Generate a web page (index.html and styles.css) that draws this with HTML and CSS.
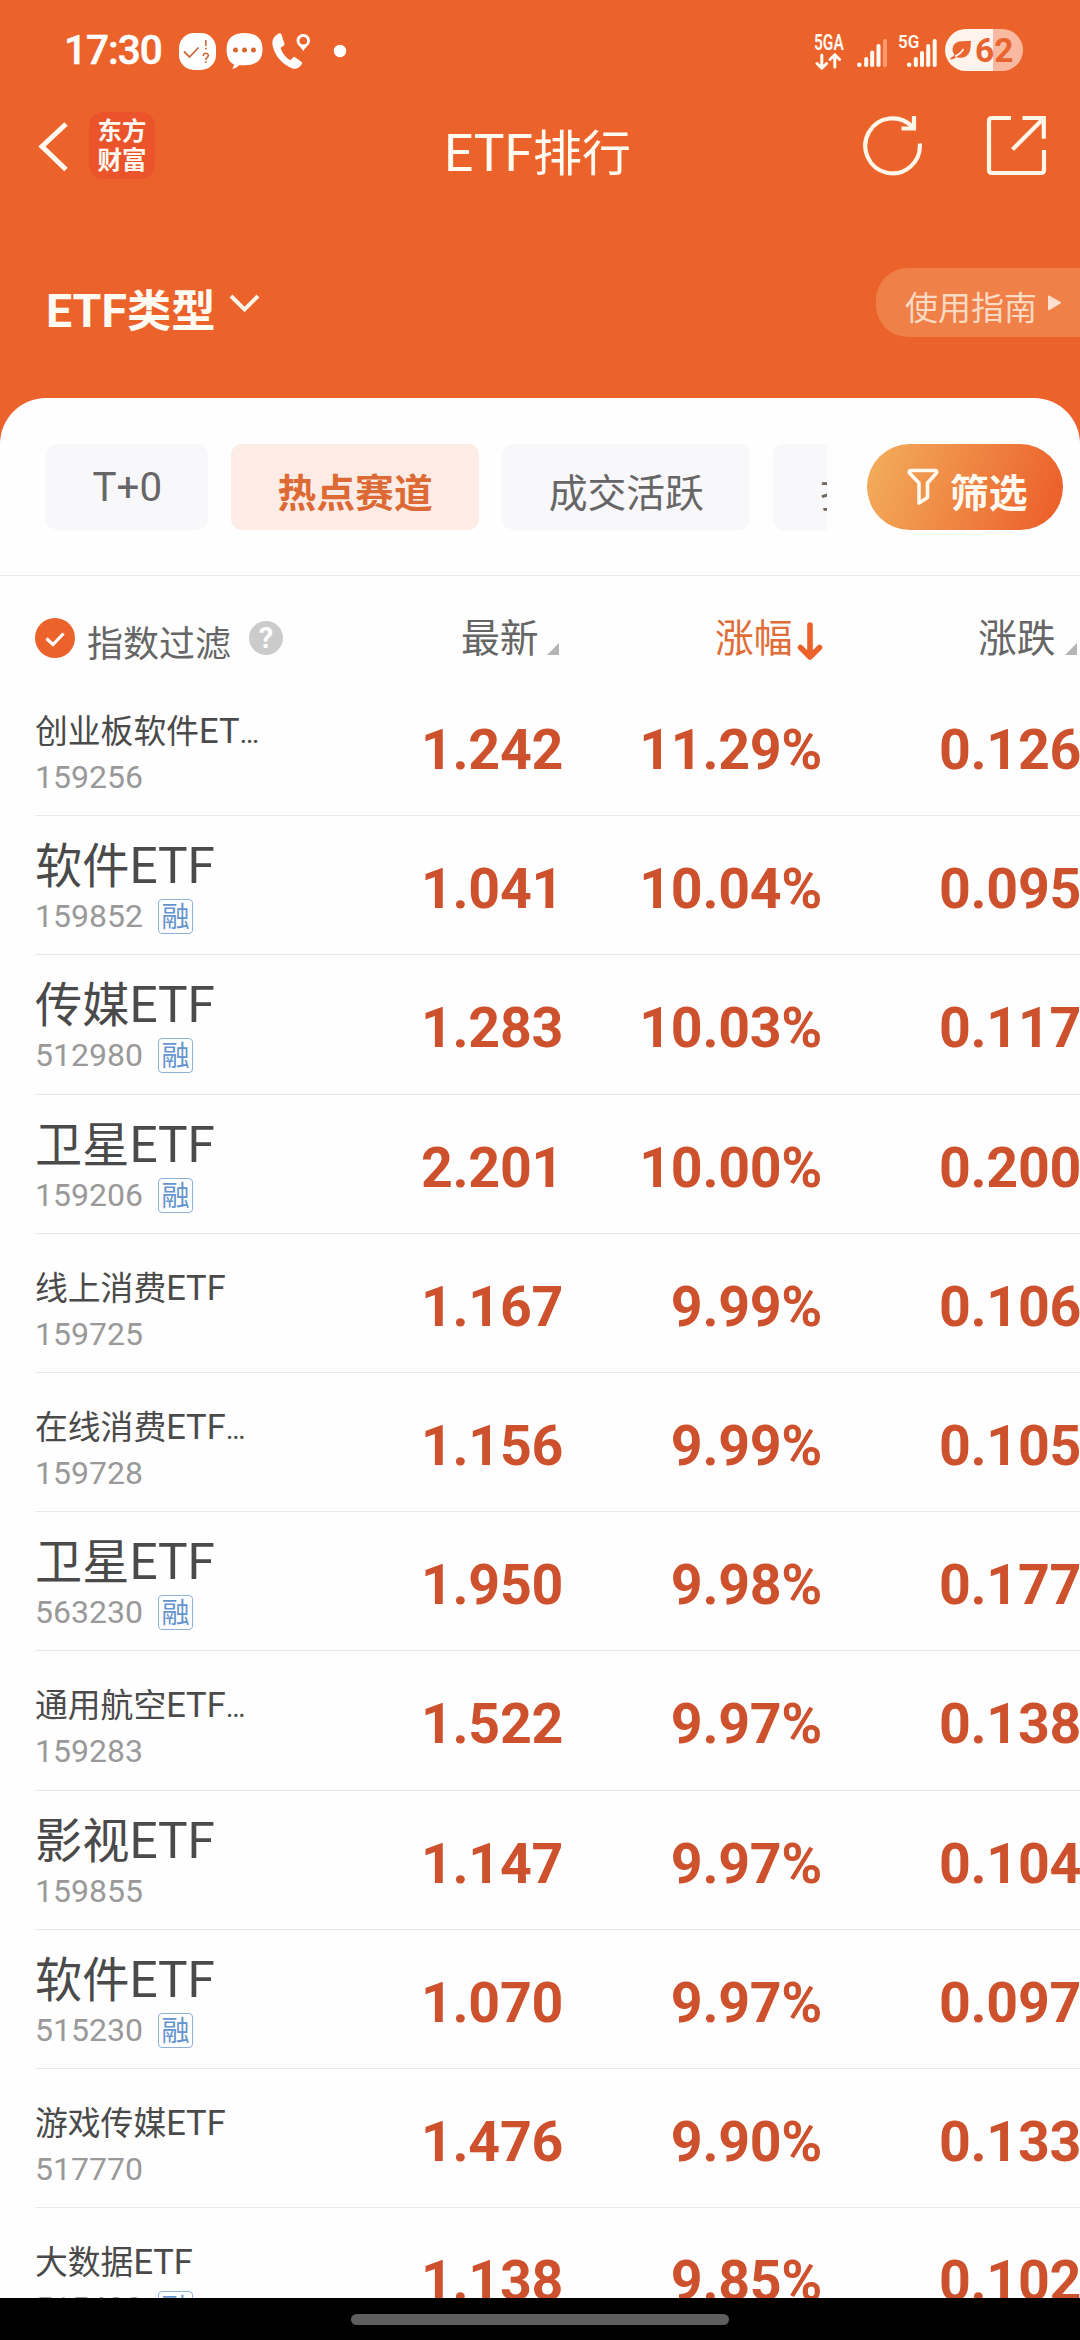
FILE: index.html
```html
<!DOCTYPE html>
<html lang="zh-CN">
<head>
<meta charset="utf-8">
<title>ETF排行</title>
<link rel="stylesheet" href="styles.css">
</head>
<body>
<div class="screen">
  <header class="top">
    <div class="status">
      <span class="time">17:30</span>
      <svg class="status-left" width="170" height="42" viewBox="178 30 170 42">
        <rect x="179" y="33" width="37" height="37" rx="15" fill="#fff"/>
        <path d="M184 51.500l5.500 5.500 9-9.500" fill="none" stroke="#c96a3c" stroke-width="1.800"/>
        <path d="M205.800 40v6M205.800 47.800v1.700M203.300 56c0-3.600 5-3.600 5-.5 0 2-2.500 2-2.500 4.500M205.800 61.300v1.700" fill="none" stroke="#c96a3c" stroke-width="1.600"/>
        <path d="M244.500 33c11.500 0 18 5 18 16.300s-6.500 16-18 16h-5.500c-2 2.200-4 3.500-7 3.700 1.400-1.500 2-3.200 1.800-4.800-5-2.300-7.200-7.500-7.200-14.900C226.600 38 233 33 244.500 33z" fill="#fff"/>
        <circle cx="235.500" cy="50" r="2.500" fill="#d8672f"/><circle cx="244.500" cy="50" r="2.500" fill="#d8672f"/><circle cx="253.500" cy="50" r="2.500" fill="#d8672f"/>
        <path d="M279 33.500c-5.500 2.500-7.800 7-6 13.500 2.800 10 9.500 17.500 19.500 21.500 4 1.200 7-1 9.300-4.300.6-1 .4-1.800-.4-2.400l-6-4.300c-1-.7-2-.5-2.800.3l-2 2.400c-4.500-2.200-8.300-7-10-12.500l3-2c1-.7 1.100-1.400.7-2.500l-2.800-8.500c-.5-1.200-1.300-1.700-2.500-1.200z" fill="#fff"/>
        <path d="M303.300 34c-4 0-6.700 3-6.700 6.600 0 4.400 4.400 6.400 6.700 10.600 2.300-4.200 6.700-6.200 6.700-10.600 0-3.600-2.700-6.600-6.700-6.600zm0 3a3.800 3.800 0 1 1 0 7.600 3.800 3.800 0 0 1 0-7.600z" fill="#fff" fill-rule="evenodd"/>
        <circle cx="340" cy="51" r="6.200" fill="#fff"/>
      </svg>
      <div class="network">
        <span class="net-label net-5ga">5GA</span>
        <svg width="29" height="17" viewBox="814 53 29 17" fill="none" stroke="#fffaf2" stroke-width="3" stroke-linecap="round" stroke-linejoin="round"><path d="M821.800 55v13M817 63.500l4.800 4.800 4.800-4.800M834.800 67V55M830 59.500l4.800-4.800 4.800 4.800"/></svg>
      </div>
      <svg class="signal-one" width="32" height="30" viewBox="856 38 32 30" fill="#fffaf2">
        <circle cx="859.300" cy="64.800" r="2.300"/><rect x="864.200" y="57" width="4" height="10" rx="1.800"/><rect x="870.200" y="50.500" width="4" height="16.500" rx="1.800"/><rect x="876.500" y="44" width="4" height="23" rx="1.800"/><rect x="883" y="39" width="4" height="28" rx="1.800" fill="#ff9a6c"/>
      </svg>
      <div class="signal-two">
        <span class="net-label net-5g">5G</span>
        <svg width="32" height="30" viewBox="906 38 32 30" fill="#fffaf2">
          <circle cx="909.200" cy="64.800" r="2.300"/><rect x="913.800" y="57" width="4" height="10" rx="1.800"/><rect x="920" y="51" width="4" height="16" rx="1.800"/><rect x="926.200" y="44" width="4" height="23" rx="1.800"/><rect x="932.700" y="39" width="4" height="28" rx="1.800"/>
        </svg>
      </div>
      <div class="battery">
        <svg width="22" height="20" viewBox="950 40 22 20"><path d="M971 40.800c-7 1-13.500-1-17 4-2.200 3.300-1.800 7.500.5 10-1.200 1.800-2.700 2.700-4.300 3.300l.5 1.500c2.300-.3 4.200-1.300 5.700-2.700 4 1.800 9 1.200 11.800-2.600 3-4.200 2.300-9 2.800-13.500z" fill="#ea6530"/><path d="M963.500 49c-2.500 4-5 6-8.500 7.300" fill="none" stroke="#fff3ed" stroke-width="1.600"/></svg>
        <span>62</span>
      </div>
    </div>
    <div class="nav">
      <svg class="back" width="32" height="54" viewBox="37 119 32 54" fill="none" stroke="#fffaf2" stroke-width="5"><path d="M66 124L42 146.500 66 169.500"/></svg>
      <div class="logo"><div>东方</div><div>财富</div></div>
      <h1><span class="en">ETF</span>排行</h1>
      <svg class="refresh" width="62" height="62" viewBox="861 114 62 62" fill="none" stroke="#fff6ea" stroke-width="4.200"><path d="M919.800 143.500A27.300 27.500 0 1 1 912.500 127" /><path d="M914 116v12.500h-12.500"/></svg>
      <svg class="share" width="62" height="62" viewBox="986 114 62 62" fill="none" stroke="#fff6ea" stroke-width="4.200"><path d="M1011 118h-19q-3 0-3 3v49q0 3 3 3h49q3 0 3-3v-20M1022.500 118h21.300v20.700M1043 119L1012.500 149.500"/></svg>
    </div>
    <div class="type-bar">
      <div class="type"><span class="en">ETF</span>类型</div>
      <svg class="chev" width="32" height="20" viewBox="229 293 32 20" fill="none" stroke="#fff6ea" stroke-width="4"><path d="M231 296l13.500 13.500L258 296"/></svg>
      <div class="guide">使用指南<svg width="15" height="16" viewBox="0 0 15 16"><path d="M1 1.500Q1 0 2.500.7L13.500 7q1.200.7 0 1.500L2.500 15Q1 15.700 1 14.200z" fill="#fbe0d2"/></svg></div>
    </div>
  </header>

  <main class="sheet">
    <div class="filters">
      <div class="chips">
        <div class="chip">T+0</div>
        <div class="chip active">热点赛道</div>
        <div class="chip">成交活跃</div>
        <div class="chip">折价溢价</div>
      </div>
      <div class="filter-btn">
        <svg width="32" height="38" viewBox="0 0 32 38" fill="none" stroke="#fffaf0" stroke-width="3.600" stroke-linejoin="round"><path d="M3 2.500h26q1.500 1.500 0 3L20.500 15v14.500L12 35V15L3 5.500q-1.500-1.500 0-3z"/></svg>
        筛选
      </div>
    </div>

    <div class="table-head">
      <div class="index-filter">
        <svg width="40" height="40" viewBox="0 0 40 40"><circle cx="20" cy="20" r="20" fill="#ec622b"/><path d="M11.500 20.500l6.500 6 10.500-11" fill="none" stroke="#fff" stroke-width="3.200"/></svg>
        <span>指数过滤</span>
        <i class="help">?</i>
      </div>
      <div class="th latest">最新<svg width="12" height="12" viewBox="0 0 12 12"><path d="M12 0v12H0z" fill="#b4b4b4"/></svg></div>
      <div class="th change">涨幅<svg width="26" height="40" viewBox="0 0 26 40" fill="none" stroke="#ec622b" stroke-width="5.600" stroke-linecap="round" stroke-linejoin="round"><path d="M13 4v31M3.500 26.500L13 36l9.500-9.500"/></svg></div>
      <div class="th delta">涨跌<svg width="12" height="12" viewBox="0 0 12 12"><path d="M12 0v12H0z" fill="#b4b4b4"/></svg></div>
    </div>

    <div class="rows">
      <div class="row small"><div class="fund"><div class="name">创业板软件<span class="en">ET</span><span class="dots">…</span></div><div class="code">159256</div></div><b>1.242</b><b>11.29%</b><b>0.126</b></div>
      <div class="row"><div class="fund"><div class="name">软件<span class="en">ETF</span></div><div class="code">159852<i class="tag">融</i></div></div><b>1.041</b><b>10.04%</b><b>0.095</b></div>
      <div class="row"><div class="fund"><div class="name">传媒<span class="en">ETF</span></div><div class="code">512980<i class="tag">融</i></div></div><b>1.283</b><b>10.03%</b><b>0.117</b></div>
      <div class="row"><div class="fund"><div class="name">卫星<span class="en">ETF</span></div><div class="code">159206<i class="tag">融</i></div></div><b>2.201</b><b>10.00%</b><b>0.200</b></div>
      <div class="row small"><div class="fund"><div class="name">线上消费<span class="en">ETF</span></div><div class="code">159725</div></div><b>1.167</b><b>9.99%</b><b>0.106</b></div>
      <div class="row small"><div class="fund"><div class="name">在线消费<span class="en">ETF</span><span class="dots">…</span></div><div class="code">159728</div></div><b>1.156</b><b>9.99%</b><b>0.105</b></div>
      <div class="row"><div class="fund"><div class="name">卫星<span class="en">ETF</span></div><div class="code">563230<i class="tag">融</i></div></div><b>1.950</b><b>9.98%</b><b>0.177</b></div>
      <div class="row small"><div class="fund"><div class="name">通用航空<span class="en">ETF</span><span class="dots">…</span></div><div class="code">159283</div></div><b>1.522</b><b>9.97%</b><b>0.138</b></div>
      <div class="row"><div class="fund"><div class="name">影视<span class="en">ETF</span></div><div class="code">159855</div></div><b>1.147</b><b>9.97%</b><b>0.104</b></div>
      <div class="row"><div class="fund"><div class="name">软件<span class="en">ETF</span></div><div class="code">515230<i class="tag">融</i></div></div><b>1.070</b><b>9.97%</b><b>0.097</b></div>
      <div class="row small"><div class="fund"><div class="name">游戏传媒<span class="en">ETF</span></div><div class="code">517770</div></div><b>1.476</b><b>9.90%</b><b>0.133</b></div>
      <div class="row small"><div class="fund"><div class="name">大数据<span class="en">ETF</span></div><div class="code">515400<i class="tag">融</i></div></div><b>1.138</b><b>9.85%</b><b>0.102</b></div>
    </div>
  </main>
  <footer class="home"><div class="pill"></div></footer>
</div>
</body>
</html>
```
FILE: styles.css
```css
* { box-sizing: border-box; }
body { margin: 0; font-family: "Noto Sans CJK SC", sans-serif; }
svg { display: block; flex: none; }
i { font-style: normal; }

.screen {
  width: 1080px;
  height: 2340px;
  overflow: hidden;
  display: flex;
  flex-direction: column;
  background: #ec622b;
}

/* Latin letters inside Chinese labels */
.en { font-family: Roboto, sans-serif; font-size: 1.05em; line-height: 0; }

/* header */
.top { height: 398px; flex: none; color: #fffaf2; }
.status { height: 100px; padding-left: 64px; display: flex; align-items: flex-start; font-family: Roboto, sans-serif; }
.time { width: 114px; padding-top: 27px; font-size: 40.500px; line-height: 47px; font-weight: 500; letter-spacing: -1px; color: #fff; -webkit-text-stroke: .5px #fff; }
.status-left { margin-top: 30px; }
.network { margin: 33px 0 0 466px; width: 29px; }
.net-label { display: block; font-weight: 600; white-space: nowrap; transform-origin: 0 0; }
.net-5ga { font-size: 21.500px; line-height: 20px; transform: scaleX(.72); }
.signal-one { margin: 38px 0 0 13px; }
.signal-two { margin-left: 10px; padding: 38px 0 0 8px; position: relative; }
.net-5g { position: absolute; left: 0; top: 32px; font-size: 18.500px; line-height: 20px; transform: scaleX(.92); }
.battery {
  margin: 29px 0 0 7px;
  width: 78px;
  height: 42px;
  border-radius: 21px;
  padding-left: 5px;
  display: flex;
  align-items: center;
  gap: 3px;
  background: linear-gradient(90deg, #fff3ed 48px, #f9b9a0 48px);
  color: #e8642f;
  font-size: 33.500px;
  font-weight: 700;
}

.nav { height: 140px; padding: 12px 0 0 37px; display: flex; align-items: flex-start; }
.back { margin-top: 7px; }
.logo {
  margin-left: 20px;
  width: 66px;
  height: 67px;
  padding-top: 4px;
  border-radius: 14px;
  background: #eb542a;
  font-size: 24.500px;
  line-height: 28.500px;
  font-weight: 700;
  text-align: center;
}
.nav h1 { margin: 2px 0 0 289px; width: 298px; font-size: 49px; line-height: 72px; font-weight: 400; white-space: nowrap; }
.refresh { margin: 2px 0 0 119px; }
.share { margin: 2px 0 0 63px; }

.type-bar { height: 158px; padding-left: 46px; display: flex; align-items: flex-start; }
.type { width: 183px; padding-top: 35px; font-size: 44.300px; line-height: 66px; font-weight: 700; white-space: nowrap; }
.chev { margin-top: 53px; }
.guide {
  margin: 28px 0 0 615px;
  width: 204px;
  height: 69px;
  padding: 10px 0 0 29px;
  display: flex;
  gap: 10px;
  border-radius: 32px 0 0 32px;
  background: #ef8047;
  color: #fbd9c3;
  font-size: 33px;
  line-height: 56px;
  white-space: nowrap;
}
.guide svg { margin-top: 17px; }

/* white sheet */
.sheet { height: 1900px; flex: none; overflow: hidden; background: #fefefe; border-radius: 46px 46px 0 0; color: #666; }
.filters { height: 178px; padding: 46px 17px 0 46px; display: flex; justify-content: space-between; border-bottom: 1px solid #e9e9e9; }
.chips { width: 781px; display: flex; gap: 23px; overflow: hidden; }
.chip {
  flex: none;
  height: 86px;
  padding: 0 46.500px;
  border-radius: 11px;
  background: #f8f8fb;
  font-size: 38.800px;
  line-height: 92px;
  white-space: nowrap;
}
.chip:first-child { width: 162px; font-family: Roboto, sans-serif; font-size: 40.300px; line-height: 88px; }
.chip.active { background: #fcece5; color: #dd6a35; font-weight: 700; }
.filter-btn {
  width: 196px;
  height: 86px;
  padding-left: 40px;
  display: flex;
  align-items: flex-start;
  gap: 11px;
  border-radius: 43px;
  background: linear-gradient(110deg, #f2ab5b 5%, #ec622b 92%);
  color: #fffaf0;
  font-size: 38.800px;
  line-height: 92px;
  font-weight: 700;
}
.filter-btn svg { margin-top: 24px; }

.table-head { height: 101px; display: flex; padding-left: 35px; }
.index-filter { width: 426px; display: flex; padding-top: 42px; font-size: 36px; line-height: 46px; }
.index-filter span { margin-left: 12px; }
.help {
  margin: 3px 0 0 18px;
  width: 34px;
  height: 34px;
  border-radius: 50%;
  background: #cbcbcb;
  color: #fff;
  font: 700 29px/35px Roboto, sans-serif;
  text-align: center;
}
.th { display: flex; font-size: 38.800px; line-height: 48px; padding-top: 35px; }
.latest { width: 254px; gap: 8px; }
.latest svg, .delta svg { margin-top: 32px; }
.change { width: 263px; gap: 4px; color: #e06d38; }
.change svg { margin-top: 10px; }
.delta { gap: 9px; }

/* fund list */
.row {
  height: 139.200px;
  margin-left: 35px;
  display: grid;
  grid-template-columns: 280px 248px 259px 259px;
  border-bottom: 1px solid #e9e9e9;
  color: #ce512d;
}
.row b { font: 700 55.500px/147px Roboto, sans-serif; letter-spacing: -.3px; text-align: right; white-space: nowrap; }
.fund { white-space: nowrap; }
.name { padding-top: 13px; height: 83px; font-size: 47.200px; line-height: 67px; color: #4a4a4a; }
.small .name { padding-top: 28px; font-size: 32.800px; line-height: 48px; }
.dots { font-family: Roboto, sans-serif; font-size: .9em; line-height: 0; }
.code { display: flex; font: 400 32px/35px Roboto, sans-serif; color: #999; }
.tag {
  margin-left: 15px;
  width: 35px;
  height: 35px;
  border: 1.500px solid #8fb0d8;
  border-radius: 4px;
  font: 400 28px/30px "Noto Sans CJK SC", sans-serif;
  color: #6494cf;
  text-align: center;
}

.home { height: 42px; flex: none; background: #000; padding-top: 16px; }
.pill { width: 378px; height: 11px; margin: 0 auto; border-radius: 6px; background: #5e5e5e; }
```
